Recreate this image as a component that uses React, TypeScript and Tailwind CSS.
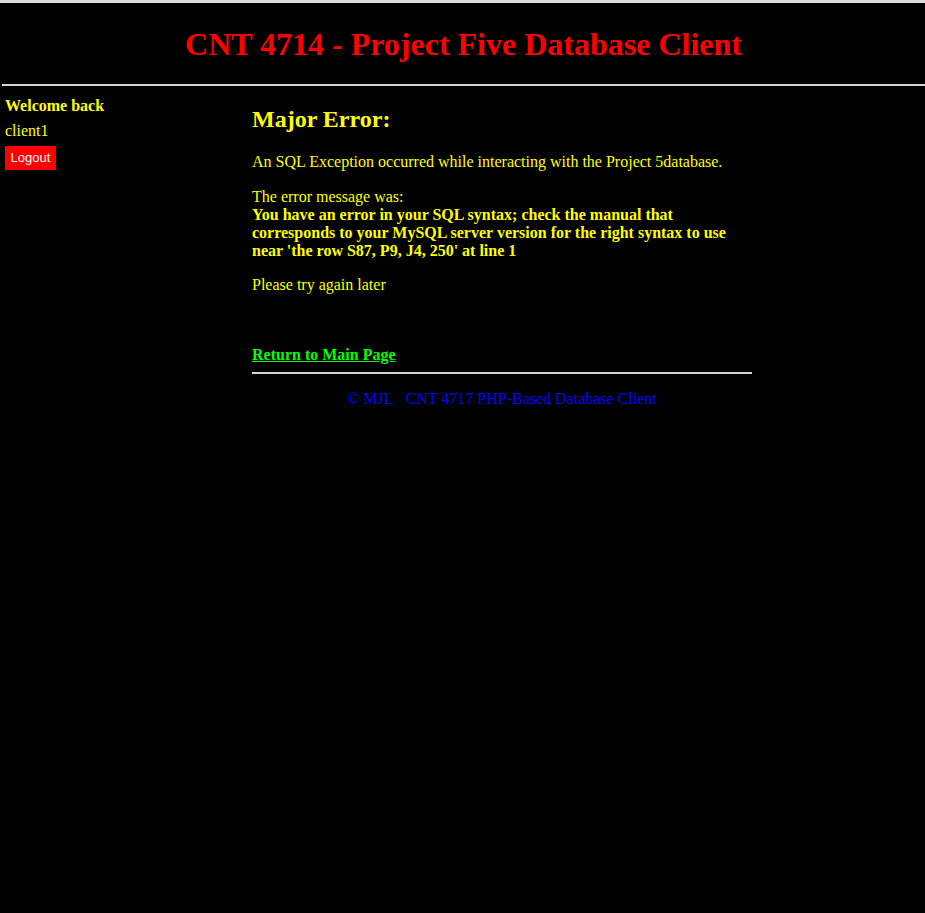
export default function App() {
  return (
    <div className="min-h-[913px] bg-black font-['Liberation_Serif',serif] text-[16px] leading-[18px]">
      <div className="h-[3px] bg-[#dcdcdc]" />
      <div className="pl-[2px]">
        <h1 className="pt-[25px] pb-[24px] text-center text-[32px] font-bold leading-[32px] text-[#ff0000]">
          CNT 4714 - Project Five Database Client
        </h1>
        <div className="h-[2px] bg-[#d4d4d4]" />
      </div>
      <div className="flex pt-[11px]">
        <div className="w-[252px] shrink-0 pl-[5px]">
          <div className="text-[16px] font-bold leading-[18px] text-[#ffff00]">Welcome back</div>
          <div className="mt-[7px] text-[#ffff00]">client1</div>
          <button
            type="button"
            className="mt-[6px] h-[24px] w-[51px] bg-[#ff0000] font-['Liberation_Sans',sans-serif] text-[13px] text-white"
          >
            Logout
          </button>
        </div>
        <div className="w-[500px] text-[#ffff00]">
          <h2 className="pt-[8px] text-[24px] font-bold leading-[28px]">Major Error:</h2>
          <p className="mt-[20px]">An SQL Exception occurred while interacting with the Project 5database.</p>
          <p className="mt-[17px]">
            The error message was:
            <br />
            <b>
              You have an error in your SQL syntax; check the manual that corresponds to your MySQL server version
              for the right syntax to use near 'the row S87, P9, J4, 250' at line 1
            </b>
          </p>
          <p className="mt-[16px]">Please try again later</p>
          <div className="mt-[52px]">
            <a href="#" className="font-bold text-[#00ff00] underline">
              Return to Main Page
            </a>
          </div>
          <div className="mt-[8px] h-[2px] bg-[#d4d4d4]" />
          <div className="mt-[16px] text-center text-[#0000ff]">© MJL&nbsp;&nbsp;&nbsp;CNT 4717 PHP-Based Database Client</div>
        </div>
      </div>
    </div>
  )
}
